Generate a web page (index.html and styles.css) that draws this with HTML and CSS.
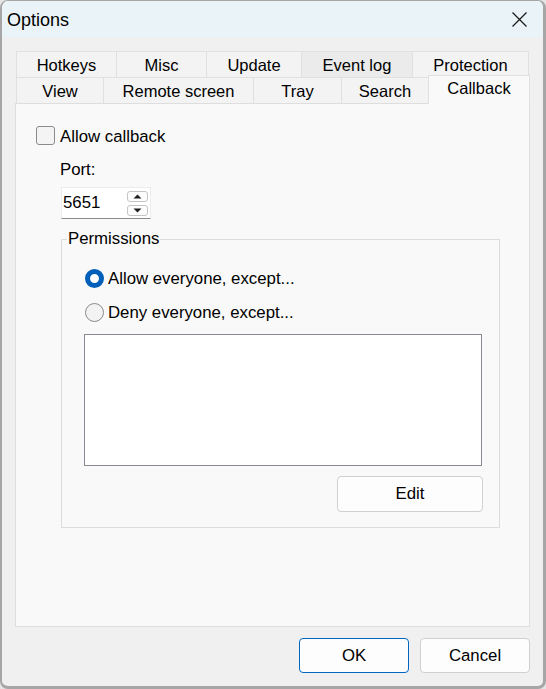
FILE: index.html
```html
<!DOCTYPE html>
<html>
<head>
<meta charset="utf-8">
<link rel="stylesheet" href="styles.css">
</head>
<body>
<div class="window">
  <div class="titlebar">
    <span class="title">Options</span>
    <svg class="close" width="15" height="15" viewBox="0 0 15 15"><path d="M0.5 0.5 L14.5 14.5 M14.5 0.5 L0.5 14.5" stroke="#1b1b1b" stroke-width="1.3" fill="none"/></svg>
  </div>
  <div class="body">
    <div class="tabs">
      <div class="tabrow">
        <div class="tab t-hotkeys">Hotkeys</div>
        <div class="tab t-misc">Misc</div>
        <div class="tab t-update">Update</div>
        <div class="tab t-eventlog hover">Event log</div>
        <div class="tab t-protection last">Protection</div>
      </div>
      <div class="tabrow front">
        <div class="tab t-view">View</div>
        <div class="tab t-remote">Remote screen</div>
        <div class="tab t-tray">Tray</div>
        <div class="tab t-search">Search</div>
        <div class="tab t-callback selected">Callback</div>
      </div>
    </div>
    <div class="panel">
      <div class="check-row"><span class="checkbox"></span><span class="lbl">Allow callback</span></div>
      <div class="port-label">Port:</div>
      <div class="spin">
        <span class="spin-value">5651</span>
        <div class="spin-btns">
          <span class="spin-btn up"><svg width="9" height="5" viewBox="0 0 9 5"><path d="M0.5 4.5 L4.5 0.5 L8.5 4.5 Z" fill="#1f1f1f"/></svg></span>
          <span class="spin-btn down"><svg width="9" height="5" viewBox="0 0 9 5"><path d="M0.5 0.5 L4.5 4.5 L8.5 0.5 Z" fill="#1f1f1f"/></svg></span>
        </div>
      </div>
      <fieldset class="group">
        <legend>Permissions</legend>
        <div class="group-body">
          <div class="radio-row"><span class="radio checked"></span><span class="lbl">Allow everyone, except...</span></div>
          <div class="radio-row"><span class="radio"></span><span class="lbl">Deny everyone, except...</span></div>
          <div class="listbox"></div>
          <div class="group-actions"><button class="btn edit">Edit</button></div>
        </div>
      </fieldset>
    </div>
    <div class="buttons">
      <button class="btn default">OK</button>
      <button class="btn">Cancel</button>
    </div>
  </div>
</div>
</body>
</html>
```
FILE: styles.css
```css
* { box-sizing: border-box; }
html, body { margin: 0; padding: 0; }
body {
  background: #e4e4e4;
  font-family: "Liberation Sans", Arial, sans-serif;
  font-size: 16.8px;
  color: #000;
}
.window {
  width: 546px;
  height: 689px;
  border-style: solid;
  border-color: #a6a6a6;
  border-width: 1px 3px 3px 2px;
  border-radius: 8px;
  background: #f0f0f0;
  overflow: hidden;
  display: flex;
  flex-direction: column;
}
.titlebar {
  height: 36px;
  flex: none;
  background: #eaf4f8;
  display: flex;
  align-items: center;
  justify-content: space-between;
  padding: 0 16px 0 5px;
}
.title {
  font-size: 18px;
  line-height: 20px;
  margin-top: 1px;
}
.close { display: block; margin-top: 1px; }
.body {
  flex: 1;
  padding: 14px 0 0 13px;
  display: flex;
  flex-direction: column;
}
.tabs { display: flex; flex-direction: column; }
.tabrow {
  display: flex;
  height: 26px;
  margin-left: 1px;
}
.tab {
  height: 26px;
  line-height: 26px;
  padding-top: 0;
  text-align: center;
  background: #f3f3f3;
  border-top: 1px solid #e0e0e0;
  border-left: 1px solid #e0e0e0;
  white-space: nowrap;
  font-size: 16.5px;
}
.tab.last { border-right: 1px solid #e0e0e0; }
.tab.hover { background: #ebebeb; }
.t-hotkeys { width: 100px; }
.t-misc { width: 90px; }
.t-update { width: 95px; }
.t-eventlog { width: 111px; }
.t-protection { width: 117px; }
.t-view { width: 87px; }
.t-remote { width: 150px; }
.t-tray { width: 88px; }
.t-search { width: 87px; }
.tab.selected {
  width: 102px;
  height: 29px;
  margin-top: -2px;
  line-height: 24px;
  padding-top: 0;
  background: #f9f9f9;
  border: 1px solid #e0e0e0;
  border-bottom: none;
  position: relative;
  z-index: 2;
}
.panel {
  width: 515px;
  height: 524px;
  flex: none;
  background: #f9f9f9;
  border: 1px solid #dedede;
  padding: 22px 0 0 20px;
}
.check-row {
  display: flex;
  align-items: center;
  gap: 5px;
  height: 19px;
}
.lbl { line-height: 20px; padding-top: 2px; }
.checkbox {
  width: 19px;
  height: 19px;
  border: 1px solid #8b8b8b;
  border-radius: 3px;
  background: #f4f4f4;
  flex: none;
}
.port-label {
  margin: 15px 0 0 24px;
  line-height: 20px;
}
.spin {
  margin: 7px 0 0 25px;
  width: 90px;
  height: 32px;
  background: #fff;
  border: 1px solid #ececec;
  border-bottom-color: #8a8a8a;
  display: flex;
  align-items: center;
  justify-content: space-between;
  padding: 0 2px 0 1px;
}
.spin-value { line-height: 20px; }
.spin-btns {
  display: flex;
  flex-direction: column;
  gap: 3px;
}
.spin-btn {
  width: 21px;
  height: 11px;
  border: 1px solid #c4c4c4;
  border-radius: 3px;
  background: #fdfdfd;
  display: flex;
  align-items: center;
  justify-content: center;
}
.spin-btn svg { display: block; }
.group {
  margin: 11px 0 0 25px;
  width: 439px;
  border: 1px solid #dcdcdc;
  padding: 0 16px 15px 5px;
  min-width: 0;
}
.group legend {
  padding: 0 1px;
  line-height: 18px;
}
.group-body {
  padding: 13px 0 0 17px;
}
.radio-row {
  display: flex;
  align-items: center;
  gap: 4px;
  height: 34px;
  padding-left: 1px;
}
.radio {
  width: 19px;
  height: 19px;
  border-radius: 50%;
  border: 1px solid #8a8a8a;
  background: #f3f3f3;
  flex: none;
}
.radio.checked {
  border: 5.5px solid #005fb8;
  background: #fff;
}
.listbox {
  margin: 5px 1px 0 0;
  height: 132px;
  background: #fff;
  border: 1px solid #868a91;
}
.group-actions {
  display: flex;
  justify-content: flex-end;
  margin-top: 10px;
}
.btn {
  font-family: "Liberation Sans", Arial, sans-serif;
  font-size: 16.8px;
  color: #000;
  background: #fdfdfd;
  border: 1px solid #d0d0d0;
  border-radius: 4px;
  width: 110px;
  height: 35px;
  padding: 0;
}
.btn.edit { width: 146px; height: 36px; }
.btn.default { border-color: #0067c0; }
.buttons {
  width: 515px;
  display: flex;
  justify-content: flex-end;
  gap: 11px;
  margin-top: 11px;
}
```
